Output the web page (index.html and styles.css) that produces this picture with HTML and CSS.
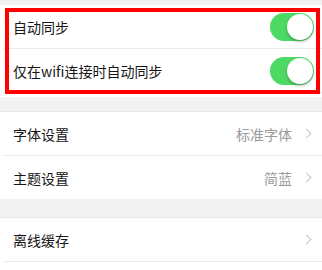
FILE: index.html
```
<!DOCTYPE html>
<html lang="zh">
<head>
<meta charset="utf-8">
<link rel="stylesheet" href="styles.css">
</head>
<body>
<div class="page">
  <div class="group group-top">
    <div class="row">
      <span class="label">自动同步</span>
      <span class="switch on"><span class="knob"></span></span>
    </div>
    <div class="row">
      <span class="label">仅在wifi连接时自动同步</span>
      <span class="switch on"><span class="knob"></span></span>
    </div>
    <div class="highlight"></div>
  </div>
  <div class="group group-mid">
    <div class="row">
      <span class="label">字体设置</span>
      <span class="value">标准字体<span class="chev"></span></span>
    </div>
    <div class="row">
      <span class="label">主题设置</span>
      <span class="value">简蓝<span class="chev"></span></span>
    </div>
  </div>
  <div class="group group-bottom">
    <div class="row">
      <span class="label">离线缓存</span>
      <span class="value"><span class="chev"></span></span>
    </div>
    <div class="row row-cut">
      <span class="label">清除缓存</span>
    </div>
  </div>
</div>
</body>
</html>
```
FILE: styles.css
```
html, body {
  margin: 0;
  padding: 0;
  background: #f2f2f2;
}
body {
  width: 322px;
  height: 270px;
  overflow: hidden;
  font-family: "Noto Sans CJK SC", "Noto Sans", sans-serif;
  font-size: 14px;
  color: #161616;
}
.page {
  display: flex;
  flex-direction: column;
}
.group {
  background: #fff;
  position: relative;
}
.group-top {
  margin-top: 5px;
  padding-bottom: 4px;
}
.group-mid {
  margin-top: 14px;
  border-top: 1px solid #e8e8e8;
}
.group-bottom {
  margin-top: 18px;
  border-top: 1px solid #e8e8e8;
}
.row {
  height: 43px;
  display: flex;
  align-items: center;
  justify-content: space-between;
  margin-left: 3px;
  padding-left: 10px;
  padding-right: 8px;
  border-bottom: 1px solid #ececec;
}
.group-top .row:last-of-type {
  border-bottom: none;
}
.group-mid .row:last-child {
  border-bottom: none;
}
.row-cut {
  align-items: flex-start;
  padding-top: 7px;
}
.label {
  line-height: 20px;
}
.value {
  display: flex;
  align-items: center;
  color: #9a9a9a;
  line-height: 20px;
}
.chev {
  display: inline-block;
  width: 6px;
  height: 6px;
  border-right: 1.3px solid #c4c4c8;
  border-top: 1.3px solid #c4c4c8;
  transform: rotate(45deg);
  margin-left: 11px;
  margin-right: 4px;
}
.switch {
  width: 44px;
  height: 28px;
  border-radius: 14px;
  background: #4cd964;
  position: relative;
  flex: none;
}
.knob {
  position: absolute;
  top: 1px;
  right: 1px;
  width: 26px;
  height: 26px;
  border-radius: 50%;
  background: #fff;
  box-shadow: 0 2px 3px rgba(0,0,0,0.25);
}
.highlight {
  position: absolute;
  left: 5px;
  top: 3px;
  width: 307px;
  height: 78px;
  border: 4px solid #ff0000;
}
```
